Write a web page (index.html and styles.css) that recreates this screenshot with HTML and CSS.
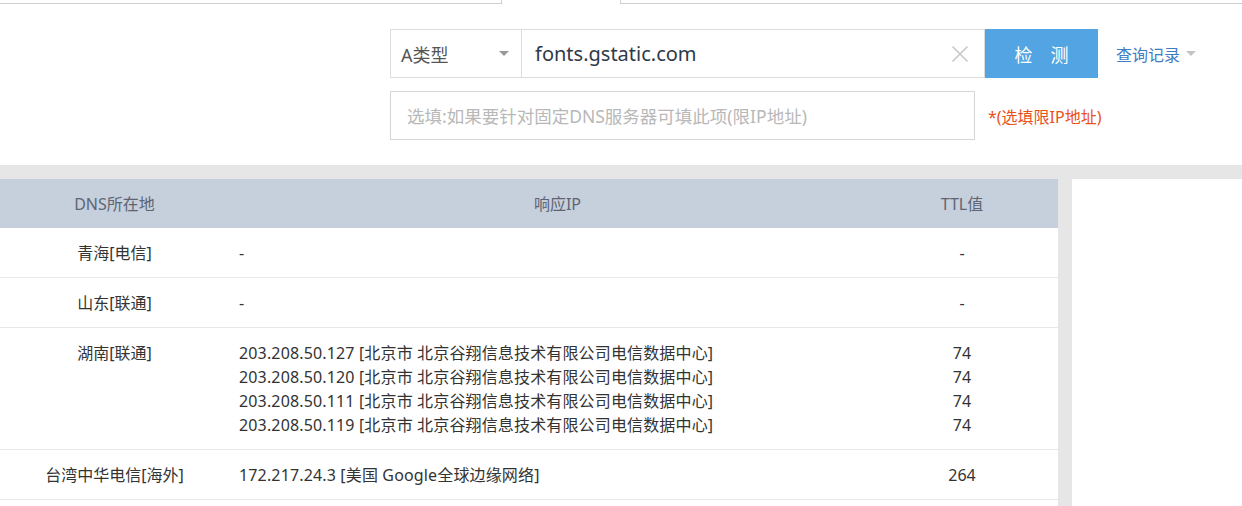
FILE: index.html
```html
<!DOCTYPE html>
<html lang="zh-CN">
<head>
<meta charset="utf-8">
<title>DNS检测</title>
<link rel="stylesheet" href="styles.css">
</head>
<body>
<div class="tabs">
  <div class="tab tab-left"></div>
  <div class="tab tab-active"></div>
  <div class="tab tab-right"></div>
</div>

<section class="search">
  <div class="search-row">
    <div class="select">
      <span>A类型</span>
      <span class="caret"></span>
    </div>
    <div class="domain">
      <span class="domain-text">fonts.gstatic.com</span>
      <svg class="clear" width="18" height="18" viewBox="0 0 18 18"><path d="M1.5 1.5L16.5 16.5M16.5 1.5L1.5 16.5" stroke="#c8c8c8" stroke-width="1.6" fill="none"/></svg>
    </div>
    <button class="btn">检　测</button>
    <a class="history">查询记录<span class="caret caret-light"></span></a>
  </div>
  <div class="search-row row-second">
    <div class="dns-input">选填:如果要针对固定DNS服务器可填此项(限IP地址)</div>
    <span class="hint">*(选填限IP地址)</span>
  </div>
</section>

<div class="main">
  <div class="table">
    <div class="thead">
      <div class="c1">DNS所在地</div>
      <div class="c2 h2">响应IP</div>
      <div class="c3">TTL值</div>
    </div>
    <div class="tr">
      <div class="c1">青海[电信]</div>
      <div class="c2">-</div>
      <div class="c3">-</div>
    </div>
    <div class="tr">
      <div class="c1">山东[联通]</div>
      <div class="c2">-</div>
      <div class="c3">-</div>
    </div>
    <div class="tr">
      <div class="c1">湖南[联通]</div>
      <div class="c2">
        <div>203.208.50.127 [北京市 北京谷翔信息技术有限公司电信数据中心]</div>
        <div>203.208.50.120 [北京市 北京谷翔信息技术有限公司电信数据中心]</div>
        <div>203.208.50.111 [北京市 北京谷翔信息技术有限公司电信数据中心]</div>
        <div>203.208.50.119 [北京市 北京谷翔信息技术有限公司电信数据中心]</div>
      </div>
      <div class="c3">
        <div>74</div><div>74</div><div>74</div><div>74</div>
      </div>
    </div>
    <div class="tr">
      <div class="c1">台湾中华电信[海外]</div>
      <div class="c2">172.217.24.3 [美国 Google全球边缘网络]</div>
      <div class="c3">264</div>
    </div>
  </div>
  <aside class="side"></aside>
</div>
</body>
</html>
```

FILE: styles.css
```css
* { box-sizing: border-box; }
html, body { margin: 0; padding: 0; }
body {
  background: #fff;
  font-family: "Noto Sans", "Noto Sans CJK SC", sans-serif;
  color: #333;
  font-size: 16px;
  overflow: hidden;
}

.tabs { display: flex; height: 4px; }
.tab { height: 4px; }
.tab-left { width: 502px; border-bottom: 1px solid #cfcfcf; border-right: 1px solid #cfcfcf; }
.tab-active { width: 118px; }
.tab-right { flex: 1; border-bottom: 1px solid #cfcfcf; border-left: 1px solid #cfcfcf; }

.search { margin: 25px 0 25px 390px; }
.search-row { display: flex; align-items: center; }
.row-second { margin-top: 13px; }

.select {
  width: 132px; height: 49px;
  border: 1px solid #dcdcdc;
  display: flex; align-items: center; justify-content: space-between;
  padding: 0 12px 0 10px;
  font-size: 18px; color: #555;
}
.caret {
  width: 0; height: 0;
  border-left: 5px solid transparent;
  border-right: 5px solid transparent;
  border-top: 5px solid #999;
}
.caret-light { border-top-color: #c4c4c4; margin-left: 6px; }

.domain {
  width: 463px; height: 49px;
  border: 1px solid #dcdcdc; border-left: none;
  display: flex; align-items: center; justify-content: space-between;
  padding: 0 15px 0 13px;
}
.domain-text { font-size: 20px; color: #2f3a48; }
.clear { display: block; }

.btn {
  width: 113px; height: 49px;
  border: none; background: #52a5e2; color: #fff;
  font-family: "Noto Sans CJK SC", sans-serif;
  font-size: 18px; cursor: pointer; padding: 0;
}
.history {
  margin-left: 18px; color: #3f7cc2; font-size: 16px;
  display: flex; align-items: center; cursor: pointer;
}

.dns-input {
  width: 585px; height: 49px;
  border: 1px solid #d6d6d6;
  display: flex; align-items: center;
  padding-left: 16px;
  font-size: 17.5px; color: #b8b8b8;
}
.hint { margin-left: 13px; color: #e8521c; font-size: 16px; }

.main {
  background: #e6e6e6;
  padding-top: 14px;
  display: flex; gap: 14px;
  min-height: 341px;
}
.table { width: 1058px; background: #fff; }
.side { flex: 1; background: #fff; }

.thead, .tr { display: grid; grid-template-columns: 229px 637px 192px; }
.thead {
  background: #c6cfdc; color: #5d6574;
  height: 49px; align-items: center; line-height: 24px;
}
.thead .c1, .thead .c3 { text-align: center; }
.thead .h2 { text-align: center; padding-left: 20px; }
.tr { border-bottom: 1px solid #e8e8e8; line-height: 24px; }
.tr > div { padding: 13px 0 12px; }
.tr .c1 { text-align: center; }
.tr .c2 { padding-left: 10px; letter-spacing: 0.15px; }
.tr .c3 { text-align: center; }
```
